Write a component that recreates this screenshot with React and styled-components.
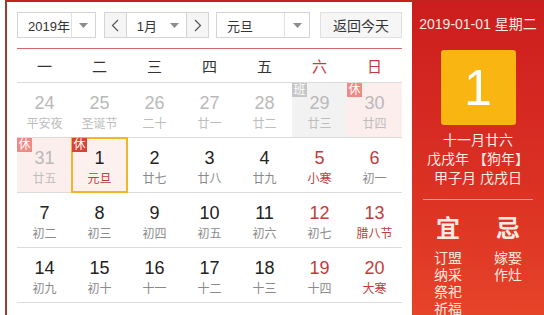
import React from 'react'
import styled, { createGlobalStyle } from 'styled-components'

const FONT = `"Liberation Sans", "Noto Sans CJK SC", sans-serif`

const weekdays = ['一', '二', '三', '四', '五', '六', '日']

// kind: prev | cur ; mark: rest | work ; red lunar = festival / solar term
const weeks = [
	[
		{ d: 24, l: '平安夜', kind: 'prev' },
		{ d: 25, l: '圣诞节', kind: 'prev' },
		{ d: 26, l: '二十', kind: 'prev' },
		{ d: 27, l: '廿一', kind: 'prev' },
		{ d: 28, l: '廿二', kind: 'prev' },
		{ d: 29, l: '廿三', kind: 'prev', mark: 'work' },
		{ d: 30, l: '廿四', kind: 'prev', mark: 'rest' },
	],
	[
		{ d: 31, l: '廿五', kind: 'prev', mark: 'rest' },
		{ d: 1, l: '元旦', mark: 'rest', fest: true, today: true },
		{ d: 2, l: '廿七' },
		{ d: 3, l: '廿八' },
		{ d: 4, l: '廿九' },
		{ d: 5, l: '小寒', fest: true },
		{ d: 6, l: '初一' },
	],
	[
		{ d: 7, l: '初二' },
		{ d: 8, l: '初三' },
		{ d: 9, l: '初四' },
		{ d: 10, l: '初五' },
		{ d: 11, l: '初六' },
		{ d: 12, l: '初七' },
		{ d: 13, l: '腊八节', fest: true },
	],
	[
		{ d: 14, l: '初九' },
		{ d: 15, l: '初十' },
		{ d: 16, l: '十一' },
		{ d: 17, l: '十二' },
		{ d: 18, l: '十三' },
		{ d: 19, l: '十四' },
		{ d: 20, l: '大寒', fest: true },
	],
	[
		{ d: 21, l: '十六' },
		{ d: 22, l: '十七' },
		{ d: 23, l: '十八' },
		{ d: 24, l: '十九' },
		{ d: 25, l: '二十' },
		{ d: 26, l: '廿一' },
		{ d: 27, l: '廿二' },
	],
]

const Arrow = () => (
	<svg width="9" height="5" viewBox="0 0 9 5">
		<path d="M0 0h9L4.5 5z" fill="#8c8c8c" />
	</svg>
)

const Chevron = ({ dir }) => (
	<svg width="8" height="13" viewBox="0 0 8 13">
		<path
			d={dir === 'left' ? 'M7 1L1.5 6.5 7 12' : 'M1 1l5.5 5.5L1 12'}
			fill="none"
			stroke="#555"
			strokeWidth="1.2"
		/>
	</svg>
)

export default function App() {
	return (
		<>
			<GlobalStyle />
			<Frame>
				<Board>
					<Toolbar>
						<Select $w={79} $arrow={23}>
							<span>2019年</span>
							<i><Arrow /></i>
						</Select>
						<MonthGroup>
							<NavButton><Chevron dir="left" /></NavButton>
							<Select $w={60} $arrow={24} $joined>
								<span>1月</span>
								<i><Arrow /></i>
							</Select>
							<NavButton><Chevron dir="right" /></NavButton>
						</MonthGroup>
						<Select $w={94} $arrow={24}>
							<span>元旦</span>
							<i><Arrow /></i>
						</Select>
						<TodayButton>返回今天</TodayButton>
					</Toolbar>

					<WeekHeader>
						{weekdays.map((w, i) => (
							<WeekName key={w} $weekend={i > 4}>{w}</WeekName>
						))}
					</WeekHeader>

					{weeks.map((week, r) => (
						<Week key={r}>
							{week.map((c, i) => (
								<Day key={i} $mark={c.mark} $today={c.today}>
									{c.mark && (
										<Badge $mark={c.mark} $faded={c.kind === 'prev'}>
											{c.mark === 'rest' ? '休' : '班'}
										</Badge>
									)}
									<DayNum $prev={c.kind === 'prev'} $weekend={i > 4}>{c.d}</DayNum>
									<Lunar $prev={c.kind === 'prev'} $fest={c.fest}>{c.l}</Lunar>
								</Day>
							))}
						</Week>
					))}
				</Board>

				<Side>
					<DateLine>2019-01-01 星期二</DateLine>
					<BigDay>1</BigDay>
					<LunarInfo>
						<div>十一月廿六</div>
						<div>戊戌年 【狗年】</div>
						<div>甲子月 戊戌日</div>
					</LunarInfo>
					<Divider />
					<Almanac>
						<div>
							<AlmanacHead>宜</AlmanacHead>
							<AlmanacItem>订盟</AlmanacItem>
							<AlmanacItem>纳采</AlmanacItem>
							<AlmanacItem>祭祀</AlmanacItem>
							<AlmanacItem>祈福</AlmanacItem>
						</div>
						<div>
							<AlmanacHead>忌</AlmanacHead>
							<AlmanacItem>嫁娶</AlmanacItem>
							<AlmanacItem>作灶</AlmanacItem>
						</div>
					</Almanac>
				</Side>
			</Frame>
		</>
	)
}

const GlobalStyle = createGlobalStyle`
	html, body {
		margin: 0;
		padding: 0;
		background: #fff;
	}
	body {
		width: 544px;
		height: 315px;
		overflow: hidden;
		font-family: ${FONT};
	}
`

const Frame = styled.div`
	display: flex;
	margin-left: 5px;
	height: 360px;
	border-top: 2px solid #c4221f;
	border-left: 2px solid #a13a30;
`

const Board = styled.div`
	width: 385px;
	padding: 10px 10px 0;
	background: #fff;
`

const Toolbar = styled.div`
	display: flex;
	align-items: stretch;
	height: 26px;
	margin-bottom: 10px;
	& > * + * {
		margin-left: 8px;
	}
	& > :nth-child(3) {
		margin-left: 7px;
	}
	& > :nth-child(4) {
		margin-left: 10px;
	}
`

const Select = styled.div`
	box-sizing: border-box;
	width: ${p => p.$w}px;
	display: flex;
	border: 1px solid #d4d4d4;
	border-left-width: ${p => (p.$joined ? 0 : 1)}px;
	border-right-width: ${p => (p.$joined ? 0 : 1)}px;
	background: #fff;
	font-size: 13px;
	color: #333;
	white-space: nowrap;
	& > span {
		flex: 1;
		display: flex;
		align-items: center;
		padding-left: 10px;
	}
	& > i {
		width: ${p => p.$arrow}px;
		display: flex;
		align-items: center;
		justify-content: center;
		border-left: 1px solid ${p => (p.$joined ? 'transparent' : '#e2e2e2')};
	}
`

const MonthGroup = styled.div`
	display: flex;
	width: 105px;
`

const NavButton = styled.div`
	box-sizing: border-box;
	width: 23px;
	display: flex;
	align-items: center;
	justify-content: center;
	border: 1px solid #d4d4d4;
	background: #f5f5f5;
`

const TodayButton = styled.div`
	box-sizing: border-box;
	width: 82px;
	display: flex;
	align-items: center;
	justify-content: center;
	border: 1px solid #e0e0e0;
	background: #f6f6f6;
	font-size: 14px;
	color: #333;
`

const WeekHeader = styled.div`
	display: grid;
	grid-template-columns: repeat(7, 55px);
	height: 33px;
	border-top: 1px solid #d06a66;
	border-bottom: 1px solid #dcdcdc;
`

const WeekName = styled.div`
	display: flex;
	align-items: center;
	justify-content: center;
	font-size: 15px;
	color: ${p => (p.$weekend ? '#c33b3b' : '#333')};
`

const Week = styled.div`
	display: grid;
	grid-template-columns: repeat(7, 55px);
	height: 54px;
	border-bottom: 1px solid #dcdcdc;
`

const Day = styled.div`
	position: relative;
	display: flex;
	flex-direction: column;
	align-items: center;
	padding-top: 9px;
	background: ${p => (p.$mark === 'rest' ? '#fdeeee' : p.$mark === 'work' ? '#f2f2f2' : '#fff')};
	${p => p.$today && `
		z-index: 1;
		outline: 2px solid #f3b62a;
		outline-offset: -1px;
		background: #fdf1f0;
	`}
`

const Badge = styled.span`
	position: absolute;
	top: 0;
	left: 0;
	width: 15px;
	height: 14px;
	display: flex;
	align-items: center;
	justify-content: center;
	font-size: 12px;
	line-height: 14px;
	color: #fff;
	background: ${p =>
		p.$mark === 'work' ? '#c6c6c6' : p.$faded ? '#ec8a85' : '#d8433b'};
`

const DayNum = styled.div`
	font-size: 18px;
	line-height: 22px;
	color: ${p => (p.$prev ? '#b9b9b9' : p.$weekend ? '#c33b3b' : '#222')};
`

const Lunar = styled.div`
	font-size: 12px;
	line-height: 16px;
	margin-top: 2px;
	color: ${p => (p.$prev ? '#bdbdbd' : p.$fest ? '#c33b3b' : '#8a8a8a')};
`

const Side = styled.div`
	flex: 1;
	display: flex;
	flex-direction: column;
	align-items: center;
	padding-top: 13px;
	background: linear-gradient(180deg, #cc1d1e 0%, #dc3324 55%, #ea4a2b 100%);
	color: #fff;
`

const DateLine = styled.div`
	font-size: 14px;
	line-height: 18px;
	color: #fde9e4;
`

const BigDay = styled.div`
	width: 75px;
	height: 75px;
	margin-top: 17px;
	border-radius: 3px;
	background: #f9b512;
	display: flex;
	align-items: center;
	justify-content: center;
	font-size: 50px;
	color: #fff;
`

const LunarInfo = styled.div`
	margin-top: 6px;
	text-align: center;
	font-size: 14px;
	line-height: 19px;
	color: #fdeee6;
`

const Divider = styled.div`
	width: 110px;
	height: 1px;
	margin-top: 11px;
	background: rgba(255, 190, 170, 0.75);
`

const Almanac = styled.div`
	display: grid;
	grid-template-columns: 60px 60px;
	margin-top: 14px;
	text-align: center;
	color: #fdebe2;
`

const AlmanacHead = styled.div`
	font-size: 24px;
	font-weight: bold;
	line-height: 30px;
	margin-bottom: 6px;
`

const AlmanacItem = styled.div`
	font-size: 14px;
	line-height: 17px;
`
